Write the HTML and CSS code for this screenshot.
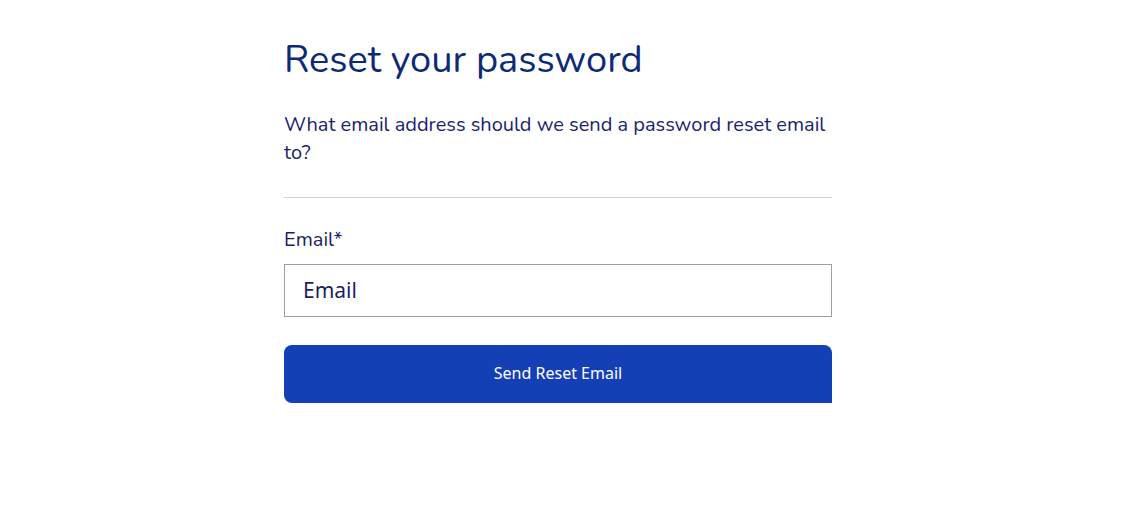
FILE: index.html
```html
<!DOCTYPE html>
<html lang="en">
<head>
<meta charset="utf-8">
<title>Reset your password</title>
<link rel="stylesheet" href="styles.css">
</head>
<body>
<main class="page">
  <section class="card">
    <h1 class="title">Reset your password</h1>
    <p class="intro">What email address should we send a password reset email to?</p>
    <hr class="divider">
    <form class="form">
      <label class="label" for="email">Email*</label>
      <input class="input" id="email" type="email" placeholder="Email">
      <button class="button" type="button">Send Reset Email</button>
    </form>
  </section>
</main>
</body>
</html>
```
FILE: styles.css
```css
* { box-sizing: border-box; }
html, body { margin: 0; padding: 0; background: #ffffff; }
body { font-family: "Nunito", "Lato", "Open Sans", sans-serif; color: #1b2470; }
.page { padding: 35px 0 0 284px; }
.card { width: 548px; display: flex; flex-direction: column; }
.title { margin: 0; font-size: 38px; font-weight: 400; line-height: 50px; color: #0c2a78; }
.intro { margin: 26px 0 0; font-size: 20px; line-height: 28px; color: #1b2470; }
.divider { margin: 30px 0 0; border: 0; border-top: 1px solid #d3d3db; height: 0; }
.form { display: flex; flex-direction: column; margin-top: 29px; }
.label { font-size: 20px; line-height: 26px; color: #1b1f60; }
.input { margin-top: 11px; height: 53px; border: 1px solid #9a9bab; padding: 0 18px 2px; font-family: "Noto Sans", sans-serif; font-size: 21px; color: #1b1f60; outline: none; }
.input::placeholder { color: #1b1f60; opacity: 1; }
.button { margin-top: 28px; height: 58px; border: 0; border-radius: 8px 8px 0 8px; background: #153fb5; color: #ffffff; font-family: "Noto Sans", sans-serif; font-size: 16px; padding: 0 0 2px; cursor: pointer; }
```
